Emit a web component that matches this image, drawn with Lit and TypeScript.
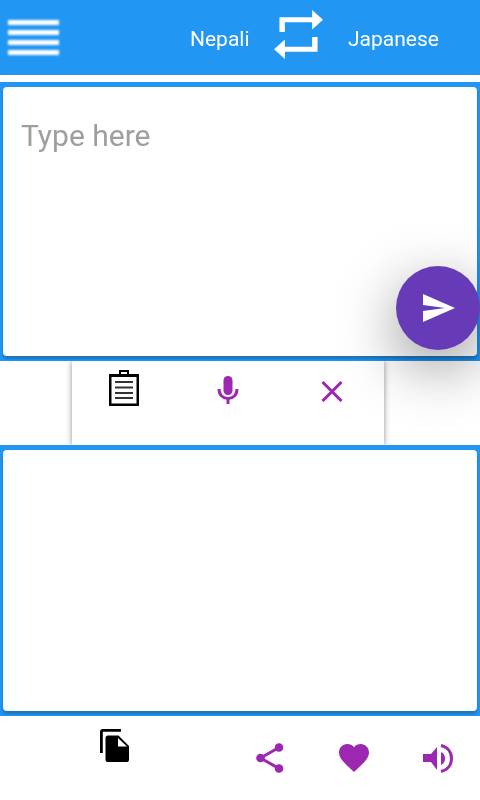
import { LitElement, html, css } from "lit";
import { customElement } from "lit/decorators.js";

@customElement("app-root")
export class AppRoot extends LitElement {
  static styles = css`
    :host { display: block; width: 480px; height: 800px; background: #fff; font-family: Roboto, sans-serif; position: relative; overflow: hidden; }
    .header { height: 75px; background: #2196f3; display: flex; align-items: center; color: #fff; font-size: 21px; }
    .menu { width: 51px; margin-left: 8px; display: flex; flex-direction: column; gap: 5px; filter: blur(0.8px); }
    .menu span { display: block; height: 5px; background: #fff; }
    .from { margin-left: 131px; width: 59px; margin-top: 2px; will-change: opacity; }
    .swap { margin-left: 25px; width: 49px; height: 49px; display: block; margin-top: -7px; filter: blur(0.4px); }
    .to { margin-left: 25px; margin-top: 2px; will-change: opacity; }
    .panel { background: #2196f3; padding: 5px 3px; overflow: hidden; }
    .panel-a { margin-top: 7px; height: 279px; box-sizing: border-box; }
    .panel-b { height: 271px; box-sizing: border-box; }
    .card { background: #fff; border-radius: 4px; height: 100%; box-sizing: border-box; box-shadow: 0 3px 3px rgba(0,0,0,.22); }
    .input { padding: 30px 18px; font-size: 30px; line-height: 38px; color: #9e9e9e; }
    .hint { display: block; will-change: opacity; }
    .tools { height: 84px; width: 312px; margin-left: 72px; background: #fff; box-shadow: 0 0 6px rgba(0,0,0,.45); display: grid; grid-template-columns: repeat(3, 1fr); justify-items: center; align-items: start; clip-path: inset(0 -10px 0 -10px); }
    .clip { margin-top: 9px; width: 30px; height: 36px; display: block; filter: blur(0.3px); }
    .mic { margin-top: 15px; width: 22px; height: 28px; display: block; }
    .x { margin-top: 20px; width: 22px; height: 21px; display: block; }
    .bottom { height: 84px; display: grid; grid-template-columns: 72px 84px 72px 84px 84px 84px; justify-items: center; align-items: start; }
    .copy { grid-column: 2; margin-top: 13px; width: 29px; height: 33px; display: block; }
    .share { grid-column: 4; margin-top: 27px; width: 28px; height: 30px; display: block; }
    .heart { margin-top: 28px; width: 30px; height: 28px; display: block; }
    .speaker { margin-top: 28px; width: 30px; height: 29px; display: block; }
    .fab { position: absolute; left: 396px; top: 266px; width: 84px; height: 84px; border-radius: 50%; background: #673ab7; box-shadow: 0 18px 60px rgba(0,0,0,.42); display: flex; align-items: center; justify-content: center; }
    .send { width: 32px; height: 28px; display: block; margin-left: 2px; }
  `;

  render() {
    return html`
      <div class="header">
        <div class="menu"><span></span><span></span><span></span><span></span></div>
        <div class="from">Nepali</div>
        <svg class="swap" viewBox="3 2 18 20" preserveAspectRatio="none"><path fill="#fff" d="M7 7h10v3l4-4-4-4v3H5v6h2V7zm10 10H7v-3l-4 4 4 4v-3h12v-6h-2v4z"/></svg>
        <div class="to">Japanese</div>
      </div>
      <div class="panel panel-a"><div class="card input"><span class="hint">Type here</span></div></div>
      <div class="tools">
        <svg class="clip" viewBox="0 0 30 36">
          <path fill="#000" d="M0 4h10V0h10v4h10v32H0zM12 2v3h6V2zM2.500 7v26.500h25V7z"/>
          <path fill="#000" d="M1 4h28v3H1z"/>
          <path stroke="#333" stroke-width="2.200" fill="none" d="M6 12h18M6 17.500h18M6 23h18M6 28h18"/>
        </svg>
        <svg class="mic" viewBox="0 0 22 28">
          <rect x="6.500" y="0" width="9" height="19" rx="4.500" fill="#9c27b0"/>
          <path d="M2 13c0 6 4 9.500 9 9.500s9-3.500 9-9.500" fill="none" stroke="#9c27b0" stroke-width="3"/>
          <path d="M11 22v6" stroke="#9c27b0" stroke-width="3"/>
        </svg>
        <svg class="x" viewBox="0 0 22 21"><path d="M1.500 1l19 19M20.500 1l-19 19" stroke="#9c27b0" stroke-width="3" fill="none"/></svg>
      </div>
      <div class="panel panel-b"><div class="card"></div></div>
      <div class="bottom">
        <svg class="copy" viewBox="0 0 29 33">
          <path fill="#000" d="M3 0h18v2.800H2.800V24H0V3a3 3 0 0 1 3-3z"/>
          <path fill="#000" d="M8 6.500h10.500L29 17v14a2 2 0 0 1-2 2H7.500a2 2 0 0 1-2-2V9a2.500 2.500 0 0 1 2.500-2.500z"/>
          <path fill="#fff" d="M18 9v8.500h9z"/>
        </svg>
        <svg class="share" viewBox="0 0 28 30" fill="#9c27b0">
          <circle cx="4.500" cy="15" r="4.300"/><circle cx="23" cy="4.500" r="4.300"/><circle cx="23" cy="25.500" r="4.300"/>
          <path d="M4.500 15L23 4.500M4.500 15L23 25.500" stroke="#9c27b0" stroke-width="3"/>
        </svg>
        <svg class="heart" viewBox="2 3 20 18.350" preserveAspectRatio="none"><path fill="#9c27b0" d="M12 21.350l-1.450-1.320C5.400 15.360 2 12.280 2 8.500 2 5.420 4.420 3 7.500 3c1.740 0 3.410.810 4.500 2.090C13.090 3.810 14.760 3 16.500 3 19.580 3 22 5.420 22 8.500c0 3.780-3.400 6.860-8.550 11.540L12 21.350z"/></svg>
        <svg class="speaker" viewBox="0 0 30 29" fill="#9c27b0">
          <path d="M0 10h8L14 3v23l-6-8H0z"/>
          <path d="M18 8c2.500 1 4 3.500 4 6.500s-1.500 5.500-4 6.500z"/>
          <path d="M18 1.500c6.500 1.500 10.500 6.500 10.500 13s-4 11.500-10.500 13" fill="none" stroke="#9c27b0" stroke-width="3"/>
        </svg>
      </div>
      <div class="fab">
        <svg class="send" viewBox="0 0 32 28"><path fill="#fff" d="M0 0l32 14L0 28V17l22-3L0 11z"/></svg>
      </div>
    `;
  }
}
